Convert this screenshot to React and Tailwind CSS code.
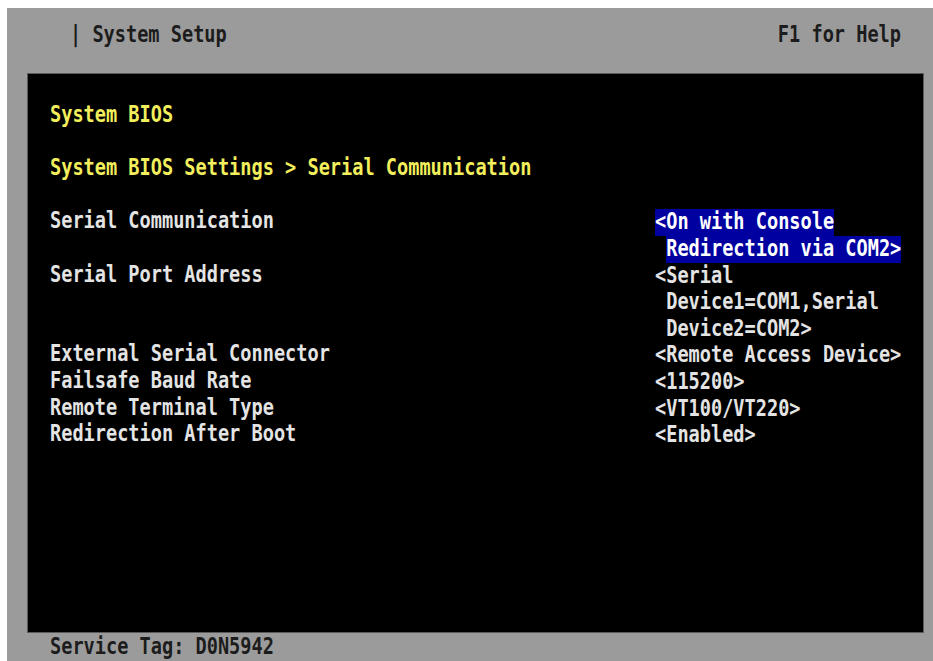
const settings = [
  { label: "Serial Communication", value: ["<On with Console", "Redirection via COM2>"], selected: true },
  { label: "Serial Port Address", value: ["<Serial", "Device1=COM1,Serial", "Device2=COM2>"] },
  { label: "External Serial Connector", value: ["<Remote Access Device>"] },
  { label: "Failsafe Baud Rate", value: ["<115200>"] },
  { label: "Remote Terminal Type", value: ["<VT100/VT220>"] },
  { label: "Redirection After Boot", value: ["<Enabled>"] },
];

// one text row of the setup screen; glyphs are stretched tall like the BIOS font
const Line = ({ children, className = "" }) => (
  <div className={`h-[26.6px] leading-[26.6px] whitespace-pre ${className}`}>
    <span className="inline-block scale-y-[1.25]">{children}</span>
  </div>
);

const Value = ({ lines, selected }) => (
  <div>
    {lines.map((text, i) => (
      <div key={i} className={`h-[26.6px] whitespace-pre ${i > 0 ? "pl-[11.2px]" : ""}`}>
        <span
          className={`inline-block h-[26.6px] leading-[26.6px] ${
            selected ? "bg-[#0000a0] text-white" : "text-[#e4e4e4]"
          }`}
        >
          <span className="inline-block scale-y-[1.25]">{text}</span>
        </span>
      </div>
    ))}
  </div>
);

const App = () => {
  return (
    <div className="w-[933px] h-[661px] bg-white pl-[7px] pt-[8px] overflow-hidden font-['DejaVu_Sans_Mono',monospace] font-bold text-[18.6px]">
      <div className="w-full h-full bg-[#9b9b9b] flex flex-col">
        {/* title bar */}
        <div className="h-[65px] flex justify-between items-start pt-[14px] pl-[63px] pr-[32px] text-[#1c1c1c]">
          <Line>| System Setup</Line>
          <Line>F1 for Help</Line>
        </div>

        {/* main black pane */}
        <div className="ml-[20px] mr-[9px] h-[560px] bg-black border border-[#5a5a5a] pt-[28px] pl-[22px]">
          <Line className="text-[#f2ee5c]">System BIOS</Line>
          <div className="h-[26.6px]" />
          <Line className="text-[#f2ee5c]">System BIOS Settings &gt; Serial Communication</Line>
          <div className="h-[26.6px]" />

          {settings.map((row, i) => (
            <div key={i} className="grid grid-cols-[605px_1fr]">
              <div className="text-[#e4e4e4]">
                <Line>{row.label}</Line>
              </div>
              <Value lines={row.value} selected={row.selected} />
            </div>
          ))}
        </div>

        {/* footer */}
        <div className="flex-1 flex items-center pl-[43px] text-[#1c1c1c]">
          <Line>Service Tag: D0N5942</Line>
        </div>
      </div>
    </div>
  );
};

export default App;
